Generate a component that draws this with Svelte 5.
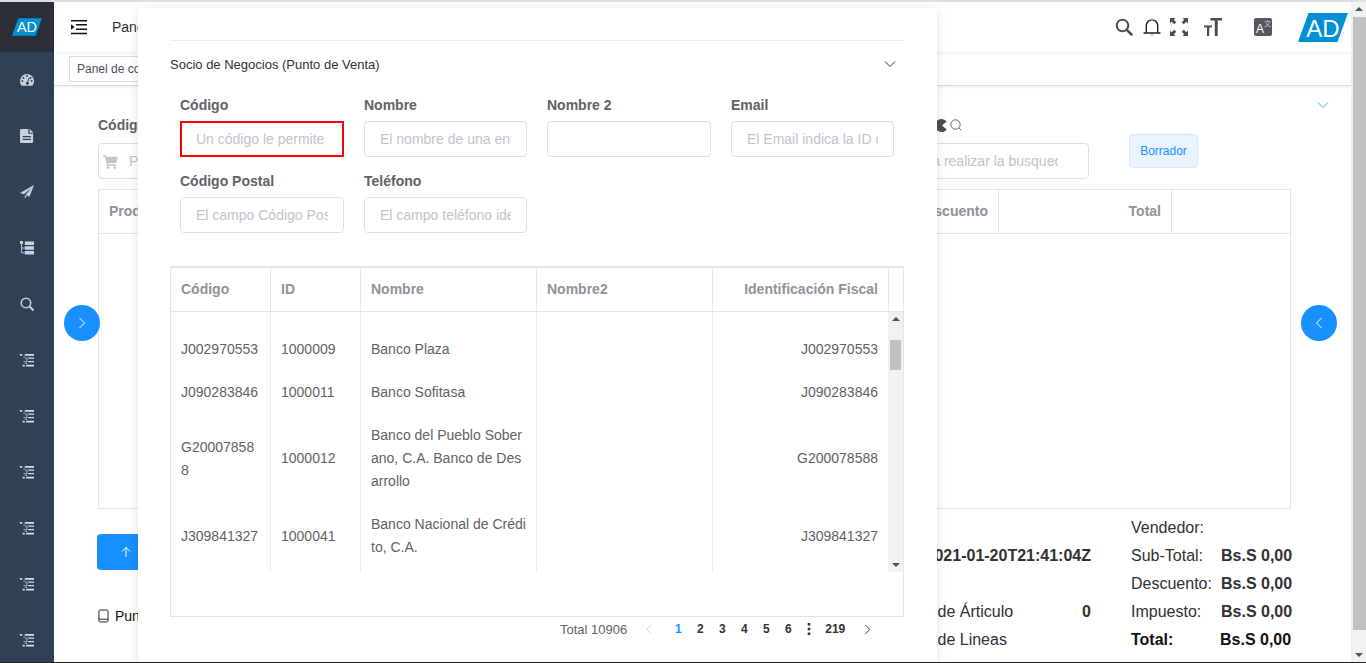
<script>
  const listIcons = [360, 416, 472, 528, 584, 640];

  const partners = [
    { code: 'J002970553', id: '1000009', name: 'Banco Plaza', tax: 'J002970553' },
    { code: 'J090283846', id: '1000011', name: 'Banco Sofitasa', tax: 'J090283846' },
    { code: 'G200078588', id: '1000012', name: 'Banco del Pueblo Soberano, C.A. Banco de Desarrollo', tax: 'G200078588' },
    { code: 'J309841327', id: '1000041', name: 'Banco Nacional de Crédito, C.A.', tax: 'J309841327' }
  ];

  const pages = ['1', '2', '3', '4', '5', '6'];
</script>

{#snippet chevron(cls, dir)}
  <svg class={cls} viewBox="0 0 12 12" fill="none" stroke="currentColor" stroke-width="1">
    {#if dir === 'down'}<path d="M1 3.5l5 5 5-5" />{/if}
    {#if dir === 'right'}<path d="M3.5 1l5 5-5 5" />{/if}
    {#if dir === 'left'}<path d="M8.5 1l-5 5 5 5" />{/if}
  </svg>
{/snippet}

{#snippet logo(cls)}
  <svg class={cls} viewBox="0 0 50 29">
    <polygon points="10.5,0 50,0 39.5,29 0,29" fill="#0090d6" />
    <text x="25" y="23.5" text-anchor="middle" font-family="Liberation Sans, sans-serif" font-size="24" fill="#fff">AD</text>
  </svg>
{/snippet}

<div class="page">
  <aside class="sidebar">
    <div class="side-logo">{@render logo('side-logo-mark')}</div>
    <nav class="side-nav">
      <svg viewBox="0 0 16 16" class="side-icon"><path fill="#c6d1de" fill-rule="evenodd" d="M8 1a8 8 0 0 0-8 8c0 2.200.8 4 2 5.500h12c1.200-1.500 2-3.300 2-5.500a8 8 0 0 0-8-8zM3.900 4.500a1.100 1.100 0 1 1 0 2.200 1.100 1.100 0 0 1 0-2.200zM6.900 3.300a1.100 1.100 0 1 1 2.200 0 1.100 1.100 0 0 1-2.200 0zM12.100 4.500a1.100 1.100 0 1 1 0 2.200 1.100 1.100 0 0 1 0-2.200zM1.600 9a1.100 1.100 0 1 1 2.200 0 1.100 1.100 0 0 1-2.200 0zM12.200 9a1.100 1.100 0 1 1 2.200 0 1.100 1.100 0 0 1-2.200 0zM10 5l1 .4-1.600 5a1.700 1.700 0 1 1-1.100-.3z" /></svg>
      <svg viewBox="0 0 16 16" class="side-icon"><path fill="#c6d1de" fill-rule="evenodd" d="M1.500 0h8v5.500H15V14.500a1.500 1.500 0 0 1-1.500 1.500h-12A1.500 1.500 0 0 1 0 14.500v-13A1.500 1.500 0 0 1 1.500 0zM3 8v1.500h9.500V8zM3 11v1.500h9.500V11zM11 0l4.500 4.200H11z" /></svg>
      <svg viewBox="0 0 16 16" class="side-icon"><path fill="#c6d1de" d="M16 0 0 9l4.500 1.600L13 3.500 6.300 11.300 10.800 13.300zM5.500 11.800v4l2.300-3z" /></svg>
      <svg viewBox="0 0 16 16" class="side-icon"><path fill="#c6d1de" d="M0 0h3.500v3.500H0zM5.500 .5H16v4H5.500zM5.500 6H16v4H5.500zM5.500 11.500H16v4H5.500z" /><path fill="none" stroke="#c6d1de" d="M1.800 3.500v10h3.700M1.800 8h3.700" /></svg>
      <svg viewBox="0 0 16 16" class="side-icon"><circle cx="6.800" cy="6.800" r="5.400" fill="none" stroke="#c6d1de" stroke-width="1.800" /><path stroke="#c6d1de" stroke-width="2.400" d="M10.600 10.600l4.800 4.800" /></svg>
      {#each listIcons as y (y)}
        <svg viewBox="0 0 16 16" class="side-icon">
          <path fill="#d5dde6" d="M0 1h2.500v2H0zM5.500 1H16v2H5.500zM3 13.500h2.500v2H3zM7 13.500h9v2H7zM9.500 5H16v1.500H9.500zM9.500 9H16v1.500H9.500z" />
          <path fill="#a9b5c2" d="M4 4h1.500v1.500H4zM6 5h2.500v1.500H6zM7 7h2v1.500H7zM4 9h1.500v1.500H4zM6 9h2.500v1.500H6zM6 11h2v1.500H6z" />
        </svg>
      {/each}
    </nav>
  </aside>

  <main class="main">
    <header class="topbar">
      <svg class="menu-icon" viewBox="0 0 16 16"><path fill="#111" d="M0 1h16v1.500H0zM5 5h11v1.500H5zM5 9.500h11V11H5zM0 13.800h16v1.500H0zM0 5.300l3.500 2.700L0 10.700z" /></svg>
      <span class="crumb">Panel de control</span>
      <div class="top-tools">
        <svg class="tool search-tool" viewBox="0 0 18 18"><circle cx="7.500" cy="7.500" r="5.800" fill="none" stroke="#4a4d55" stroke-width="2" /><path stroke="#4a4d55" stroke-width="2.600" d="M11.800 11.800l5.400 5.400" /></svg>
        <svg class="tool bell-tool" viewBox="0 0 18 18"><path fill="none" stroke="#111" stroke-width="1.300" d="M3.300 14.500V7.500a5.700 5.700 0 0 1 11.400 0v7" /><path stroke="#111" stroke-width="1.400" d="M.5 15h17" /><circle cx="9" cy="1.200" r="1" fill="#e8a33c" /><circle cx="9" cy="17" r="1" fill="#e8a33c" /></svg>
        <svg class="tool full-tool" viewBox="0 0 18 18"><path fill="#4a4d55" d="M0 0h5.500L3.800 1.700 6.300 4.200 4.200 6.300 1.700 3.800 0 5.500zM18 0v5.500l-1.700-1.700-2.500 2.500-2.100-2.100 2.500-2.500L12.500 0zM0 18v-5.500l1.700 1.700 2.500-2.500 2.100 2.100-2.500 2.500L5.500 18zM18 18h-5.500l1.700-1.700-2.500-2.500 2.100-2.100 2.500 2.500 1.700-1.700z" /></svg>
        <svg class="tool size-tool" viewBox="0 0 18 18"><path fill="#4a4d55" d="M6.500 0H18v2.500h-4.300V18h-2.900V2.500H6.500zM0 7.500h8v2H5.200V18H3V9.500H0z" /></svg>
        <div class="lang-tool"><span class="lang-a">A</span><span class="lang-x">文</span></div>
        <div class="top-logo">{@render logo('top-logo-mark')}</div>
      </div>
    </header>

    <div class="tagbar"><span class="tag">Panel de control</span></div>

    <section class="card">
      <div class="card-toggle">{@render chevron('card-chevron', 'down')}</div>
      <div class="filters">
        <div class="filter code-filter">
          <div class="label">Código</div>
          <div class="fake-input">
            <svg class="cart" viewBox="0 0 16 16"><path fill="#c0c4cc" d="M0 1h3l.6 2H16l-2 6.500H5.200L5.700 11H14v1.500H4.200L2 2.500H0z" /><circle cx="5.500" cy="14.500" r="1.500" fill="#c0c4cc" /><circle cx="12.500" cy="14.500" r="1.500" fill="#c0c4cc" /></svg>
            <span class="ph">Producto</span>
          </div>
        </div>
        <div class="filter search-filter">
          <div class="label label-right">
            <svg class="pac" viewBox="0 0 13 13"><path fill="#4f4f4f" d="M6.500 0a6.500 6.500 0 0 1 5.200 2.600L7 6.500l4.700 3.900A6.500 6.500 0 1 1 6.500 0z" /></svg>
            <svg class="lens" viewBox="0 0 12 12" fill="none" stroke="#5a6672"><circle cx="5.500" cy="5.500" r="4.700" /><path d="M9 9l2.500 2.500" /></svg>
          </div>
          <div class="fake-input search-input"><input class="inner" placeholder="para realizar la busqueda" /></div>
        </div>
        <button class="draft">Borrador</button>
      </div>

      <div class="order-table">
        <div class="order-head">
          <div class="oh">Producto</div>
          <div class="oh num">Descuento</div>
          <div class="oh num cell-line">Total</div>
          <div class="oh cell-line"></div>
        </div>
      </div>

      <div class="summary">
        <div class="summary-left">
          <button class="up-btn" aria-label="Subir">
            <svg viewBox="0 0 12 12" fill="none" stroke="#fff"><path d="M6 11V1.500M2 5.500l4-4 4 4" /></svg>
          </button>
          <div class="point">
            <svg viewBox="0 0 12 14" fill="none" stroke="#111"><rect x="1" y=".5" width="10" height="13" rx="1.500" /><path d="M1 10.500h10" /></svg>
            <span>Punto de Venta</span>
          </div>
        </div>
        <div class="summary-mid">
          <div class="s-row"></div>
          <div class="s-row date"><b>Fecha: 2021-01-20T21:41:04Z</b></div>
          <div class="s-row"></div>
          <div class="s-row"><span>Cantidad de Árticulo</span><b>0</b></div>
          <div class="s-row"><span>Cantidad de Lineas</span></div>
        </div>
        <div class="summary-right">
          <div class="t-row"><span>Vendedor:</span></div>
          <div class="t-row"><span>Sub-Total:</span><b>Bs.S 0,00</b></div>
          <div class="t-row"><span>Descuento:</span><b>Bs.S 0,00</b></div>
          <div class="t-row"><span>Impuesto:</span><b>Bs.S 0,00</b></div>
          <div class="t-row t-total"><span>Total:</span><b>Bs.S 0,00</b></div>
        </div>
      </div>
    </section>
  </main>

  <div class="page-scroll">
    <span class="arrow arrow-up"></span>
    <span class="page-thumb"></span>
    <span class="arrow arrow-down"></span>
  </div>

  <button class="round round-left" aria-label="Abrir panel izquierdo">{@render chevron('round-chevron', 'right')}</button>
  <button class="round round-right" aria-label="Abrir panel derecho">{@render chevron('round-chevron', 'left')}</button>

  <div class="drawer">
    <div class="collapse-head">
      <span>Socio de Negocios (Punto de Venta)</span>
      {@render chevron('collapse-chevron', 'down')}
    </div>
    <div class="drawer-form">
      <label class="field"><span>Código</span><input class="active" placeholder="Un código le permite" /></label>
      <label class="field"><span>Nombre</span><input placeholder="El nombre de una entidad" /></label>
      <label class="field"><span>Nombre 2</span><input /></label>
      <label class="field"><span>Email</span><input placeholder="El Email indica la ID de correo" /></label>
      <label class="field"><span>Código Postal</span><input placeholder="El campo Código Postal" /></label>
      <label class="field"><span>Teléfono</span><input placeholder="El campo teléfono identifica" /></label>
    </div>

    <div class="partner-table">
      <div class="p-row p-head">
        <div>Código</div>
        <div>ID</div>
        <div>Nombre</div>
        <div>Nombre2</div>
        <div class="num">Identificación Fiscal</div>
        <div class="gutter"></div>
      </div>
      <div class="p-body">
        <div class="p-rows">
          {#each partners as p (p.id)}
            <div class="p-row">
              <div>{p.code}</div>
              <div>{p.id}</div>
              <div>{p.name}</div>
              <div></div>
              <div class="num">{p.tax}</div>
              <div class="gutter"></div>
            </div>
          {/each}
        </div>
        <div class="p-lines">
          <span></span><span></span><span></span><span></span><span></span>
        </div>
        <div class="p-scroll">
          <span class="arrow arrow-up"></span>
          <span class="p-thumb"></span>
          <span class="arrow arrow-down"></span>
        </div>
      </div>
    </div>

    <div class="pager">
      <span class="total">Total 10906</span>
      {@render chevron('pager-prev', 'left')}
      <div class="pages">
        {#each pages as n, i (n)}
          <span class:current={i === 0}>{n}</span>
        {/each}
        <svg class="more" viewBox="0 0 4 12"><path fill="#303133" d="M.7 0h2.600v2.600H.7zM.7 4.700h2.600v2.600H.7zM.7 9.400h2.600V12H.7z" /></svg>
        <span class="last">219</span>
      </div>
      {@render chevron('pager-next', 'right')}
    </div>
  </div>
</div>

<style>
  :global(body) {
    margin: 0;
    font-family: "Liberation Sans", Arial, sans-serif;
    background: #fff;
    overflow: hidden;
  }
  .page {
    position: relative;
    display: flex;
    height: 663px;
    box-sizing: border-box;
    border-top: 2px solid #dfdfdf;
    border-bottom: 1px solid #222;
    overflow: hidden;
    color: #303133;
  }
  .sidebar {
    width: 54px;
    flex-shrink: 0;
    background: #304156;
  }
  .side-logo {
    height: 50px;
    background: #2b2f3a;
    display: flex;
    align-items: center;
    justify-content: center;
  }
  .side-logo-mark {
    width: 30px;
    height: 18px;
  }
  .side-nav {
    display: flex;
    flex-direction: column;
    align-items: center;
    gap: 42px;
    padding-top: 21px;
  }
  .side-icon {
    width: 14px;
    height: 14px;
    display: block;
  }

  .main {
    flex: 1;
    min-width: 0;
    display: flex;
    flex-direction: column;
  }
  .topbar {
    height: 50px;
    flex-shrink: 0;
    display: flex;
    align-items: center;
    padding-left: 17px;
    box-shadow: 0 1px 4px rgba(0, 21, 41, .08);
  }
  .menu-icon {
    width: 16px;
    height: 16px;
  }
  .crumb {
    margin-left: 25px;
    font-size: 14px;
    color: #303133;
  }
  .top-tools {
    margin-left: auto;
    display: flex;
    align-items: center;
    height: 100%;
  }
  .tool {
    display: block;
    width: 18px;
    height: 18px;
  }
  .search-tool { margin-right: 10px; }
  .bell-tool { margin-right: 9px; }
  .full-tool { margin-right: 16px; }
  .size-tool { margin-right: 32px; }
  .lang-tool {
    position: relative;
    width: 18px;
    height: 18px;
    background: #55585f;
    border-radius: 2px;
    color: #fff;
    margin-right: 26px;
  }
  .lang-a {
    position: absolute;
    left: 2px;
    top: 4px;
    font-size: 12px;
    line-height: 14px;
  }
  .lang-x {
    position: absolute;
    right: 1px;
    top: 1px;
    font-size: 7px;
    line-height: 9px;
    font-family: "Noto Sans CJK SC", sans-serif;
    color: #ccc;
  }
  .top-logo {
    margin-right: 3px;
    display: flex;
  }
  .top-logo-mark {
    width: 50px;
    height: 29px;
  }
  .tagbar {
    height: 34px;
    flex-shrink: 0;
    box-sizing: border-box;
    display: flex;
    padding: 4px 15px;
    border-bottom: 1px solid #d8dce5;
    box-shadow: 0 1px 3px 0 rgba(0, 0, 0, .08);
  }
  .tag {
    height: 26px;
    box-sizing: border-box;
    border: 1px solid #d8dce5;
    padding: 0 7px;
    font-size: 12px;
    line-height: 24px;
    color: #495060;
    white-space: nowrap;
  }

  .card {
    flex: 1;
    min-height: 0;
    position: relative;
    padding: 0 60px 0 44px;
    margin-top: 1px;
    border-radius: 4px;
  }
  .card-toggle {
    height: 29px;
    display: flex;
    justify-content: flex-end;
    align-items: flex-end;
    margin-right: -38px;
  }
  .card-chevron {
    width: 12px;
    height: 12px;
    color: #46a6ff;
    margin-bottom: 5px;
  }
  .filters {
    display: flex;
    height: 63px;
  }
  .filter {
    display: flex;
    flex-direction: column;
  }
  .code-filter { width: 480px; }
  .search-filter { width: 511px; }
  .label {
    height: 18px;
    margin-bottom: 9px;
    font-size: 14px;
    line-height: 18px;
    font-weight: 700;
    color: #606266;
  }
  .label-right {
    display: flex;
    align-items: center;
    justify-content: flex-end;
    gap: 2px;
    padding-right: 127px;
  }
  .pac {
    width: 13px;
    height: 13px;
  }
  .lens {
    width: 12px;
    height: 12px;
  }
  .fake-input {
    height: 36px;
    box-sizing: border-box;
    border: 1px solid #dcdfe6;
    border-radius: 4px;
    display: flex;
    align-items: center;
    padding-left: 4px;
    font-size: 14px;
    overflow: hidden;
    white-space: nowrap;
  }
  .cart {
    width: 15px;
    height: 15px;
    margin-right: 11px;
  }
  .ph {
    color: #c0c4cc;
  }
  .search-input {
    justify-content: flex-end;
    padding-right: 30px;
  }
  .inner {
    width: 146px;
    padding: 0;
    border: 0;
    outline: none;
    font: 14px "Liberation Sans", Arial, sans-serif;
  }
  .inner::placeholder {
    color: #c0c4cc;
  }
  .draft {
    align-self: flex-start;
    margin: 18px 0 0 40px;
    width: 69px;
    height: 34px;
    padding: 0;
    box-sizing: border-box;
    border: 1px solid #d1e9ff;
    border-radius: 4px;
    background: #e8f4ff;
    color: #1890ff;
    font: 12px "Liberation Sans", Arial, sans-serif;
  }
  .order-table {
    margin-top: 10px;
    height: 320px;
    box-sizing: border-box;
    border: 1px solid #dfe6ec;
  }
  .order-head {
    display: grid;
    grid-template-columns: auto 1fr 173px 119px;
    height: 44px;
    box-sizing: border-box;
    border-bottom: 1px solid #dfe6ec;
    font-size: 14px;
    font-weight: 700;
    color: #909399;
    line-height: 43px;
  }
  .oh {
    padding: 0 10px;
    white-space: nowrap;
  }
  .oh.num { text-align: right; }
  .cell-line { border-left: 1px solid #dfe6ec; }

  .summary {
    display: grid;
    grid-template-columns: 1fr 222px 160px;
    column-gap: 40px;
    font-size: 16px;
  }
  .summary-left {
    padding-top: 25px;
  }
  .up-btn {
    display: block;
    margin-left: -1px;
    width: 120px;
    height: 36px;
    border: 0;
    padding: 0;
    border-radius: 4px;
    background: #1890ff;
  }
  .up-btn svg {
    width: 12px;
    height: 12px;
    display: block;
    margin: 0 auto 0 23px;
  }
  .point {
    display: flex;
    align-items: center;
    gap: 6px;
    margin-top: 38px;
    font-size: 14px;
    color: #111;
  }
  .point svg {
    width: 11px;
    height: 14px;
  }
  .summary-mid {
    padding-top: 5px;
  }
  .s-row {
    height: 28px;
    line-height: 28px;
    display: flex;
    justify-content: space-between;
    white-space: nowrap;
  }
  .date {
    justify-content: flex-end;
  }
  .summary-right {
    padding-top: 5px;
  }
  .t-row {
    height: 28px;
    line-height: 28px;
    display: grid;
    grid-template-columns: 90px auto;
    white-space: nowrap;
  }
  .t-total { font-weight: 700; color: #111; }
  .t-total b { margin-left: -1px; }

  .page-scroll {
    width: 15px;
    flex-shrink: 0;
    background: #f1f1f1;
    display: flex;
    flex-direction: column;
    align-items: center;
    position: relative;
  }
  .page-thumb {
    position: absolute;
    top: 15px;
    left: 2px;
    right: 0;
    height: 613px;
    background: #c1c1c1;
  }
  .arrow {
    position: absolute;
    width: 0;
    height: 0;
    border-left: 4px solid transparent;
    border-right: 4px solid transparent;
  }
  .arrow-up {
    top: 5px;
    border-bottom: 4px solid #505050;
  }
  .arrow-down {
    bottom: 5px;
    border-top: 4px solid #505050;
  }

  .round {
    position: absolute;
    top: 303px;
    width: 36px;
    height: 36px;
    padding: 0;
    border: 0;
    border-radius: 50%;
    background: #1890ff;
    color: #fff;
    display: flex;
    align-items: center;
    justify-content: center;
  }
  .round-left { left: 64px; }
  .round-right { left: 1301px; }
  .round :global(.round-chevron) {
    width: 12px;
    height: 12px;
  }

  .drawer {
    position: absolute;
    left: 138px;
    top: 6px;
    bottom: -20px;
    width: 799px;
    box-sizing: border-box;
    padding: 32px 33px 0 32px;
    background: #fff;
    border-radius: 4px;
    box-shadow: 0 2px 12px 0 rgba(0, 0, 0, .12);
  }
  .collapse-head {
    height: 47px;
    border-top: 1px solid #e6ebf5;
    box-sizing: border-box;
    display: flex;
    align-items: center;
    justify-content: space-between;
    font-size: 13px;
    color: #303133;
  }
  .collapse-head :global(.collapse-chevron) {
    width: 12px;
    height: 12px;
    margin-right: 8px;
    color: #303133;
  }
  .drawer-form {
    display: grid;
    grid-template-columns: 164px 163px 164px 163px;
    column-gap: 20px;
    row-gap: 15px;
    padding: 9px 10px 0;
  }
  .field {
    display: block;
  }
  .field span {
    display: block;
    height: 18px;
    margin-bottom: 7px;
    font-size: 14px;
    line-height: 18px;
    font-weight: 700;
    color: #606266;
  }
  .field input {
    display: block;
    width: 100%;
    height: 36px;
    box-sizing: border-box;
    padding: 0 15px;
    border: 1px solid #dcdfe6;
    border-radius: 4px;
    font: 14px "Liberation Sans", Arial, sans-serif;
    outline: none;
  }
  .field input::placeholder {
    color: #c0c4cc;
  }
  .field input.active {
    border: 2px solid #f00;
    border-radius: 0;
    padding: 0 14px;
  }

  .partner-table {
    margin-top: 33px;
    height: 351px;
    box-sizing: border-box;
    border: 1px solid #dfe6ec;
    border-top-width: 2px;
    font-size: 14px;
    color: #606266;
  }
  .p-row {
    display: grid;
    grid-template-columns: 100px 90px 176px 176px 176px 15px;
    line-height: 23px;
    align-items: center;
  }
  .p-row > div {
    box-sizing: border-box;
    padding: 10px;
    word-break: break-all;
  }
  .p-row > .gutter {
    padding: 0;
  }
  .p-row > .num {
    text-align: right;
    padding-right: 11px;
  }
  .p-head {
    height: 43px;
    border-bottom: 1px solid #dfe6ec;
    font-weight: 700;
    color: #909399;
    align-items: stretch;
  }
  .p-row.p-head > div {
    border-right: 1px solid #dfe6ec;
    white-space: nowrap;
    padding: 10px;
  }
  .p-row.p-head > div:last-child {
    border-right: 0;
  }
  .p-body {
    position: relative;
    height: 260px;
    overflow: hidden;
  }
  .p-rows {
    padding-top: 16px;
  }
  .p-lines {
    position: absolute;
    inset: 0 15px 0 0;
    display: grid;
    grid-template-columns: 100px 90px 176px 176px 1fr;
    pointer-events: none;
  }
  .p-lines span {
    border-right: 1px solid #ebeef5;
  }
  .p-lines span:last-child {
    border-right: 0;
  }
  .p-scroll {
    position: absolute;
    top: 0;
    right: 0;
    bottom: 0;
    width: 15px;
    background: #f1f1f1;
    display: flex;
    justify-content: center;
  }
  .p-thumb {
    position: absolute;
    left: 2px;
    right: 2px;
    top: 28px;
    height: 30px;
    background: #c1c1c1;
  }

  .pager {
    display: flex;
    align-items: center;
    height: 24px;
    padding-left: 390px;
    font-size: 13px;
  }
  .total {
    color: #606266;
    white-space: nowrap;
  }
  .pager :global(.pager-prev) {
    width: 10px;
    height: 10px;
    color: #c0c4cc;
    margin-left: 17px;
  }
  .pages {
    display: flex;
    align-items: center;
    margin-left: 13px;
    font-size: 12px;
    font-weight: 700;
    color: #303133;
  }
  .pages span {
    width: 22px;
    text-align: center;
  }
  .pages .current {
    color: #1890ff;
  }
  .more {
    width: 4px;
    height: 12px;
    margin: 0 8px 0 8px;
  }
  .pages .last {
    width: 30px;
    margin-left: 1px;
  }
  .pager :global(.pager-next) {
    width: 11px;
    height: 11px;
    color: #303133;
    margin-left: 12px;
  }
</style>
